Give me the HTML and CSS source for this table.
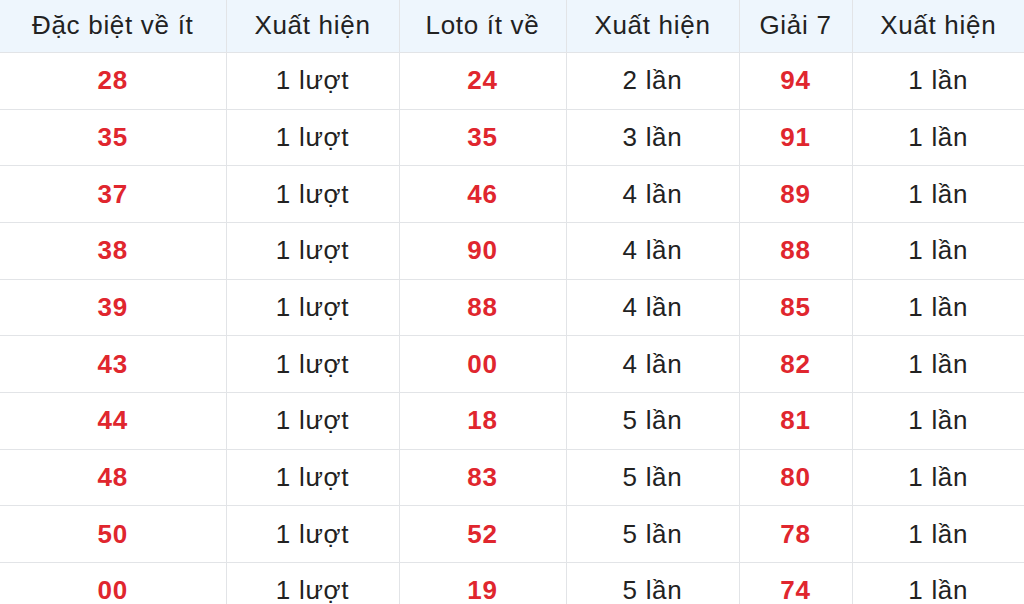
FILE: index.html
```html
<!DOCTYPE html>
<html lang="vi">
<head>
<meta charset="utf-8">
<link rel="stylesheet" href="styles.css">
</head>
<body>
<table class="stats">
  <colgroup>
    <col class="c1"><col class="c2"><col class="c3"><col class="c4"><col class="c5"><col class="c6">
  </colgroup>
  <thead>
    <tr><th>Đặc biệt về ít</th><th>Xuất hiện</th><th>Loto ít về</th><th>Xuất hiện</th><th>Giải 7</th><th>Xuất hiện</th></tr>
  </thead>
  <tbody>
    <tr><td class="num">28</td><td>1 lượt</td><td class="num">24</td><td>2 lần</td><td class="num">94</td><td>1 lần</td></tr>
    <tr><td class="num">35</td><td>1 lượt</td><td class="num">35</td><td>3 lần</td><td class="num">91</td><td>1 lần</td></tr>
    <tr><td class="num">37</td><td>1 lượt</td><td class="num">46</td><td>4 lần</td><td class="num">89</td><td>1 lần</td></tr>
    <tr><td class="num">38</td><td>1 lượt</td><td class="num">90</td><td>4 lần</td><td class="num">88</td><td>1 lần</td></tr>
    <tr><td class="num">39</td><td>1 lượt</td><td class="num">88</td><td>4 lần</td><td class="num">85</td><td>1 lần</td></tr>
    <tr><td class="num">43</td><td>1 lượt</td><td class="num">00</td><td>4 lần</td><td class="num">82</td><td>1 lần</td></tr>
    <tr><td class="num">44</td><td>1 lượt</td><td class="num">18</td><td>5 lần</td><td class="num">81</td><td>1 lần</td></tr>
    <tr><td class="num">48</td><td>1 lượt</td><td class="num">83</td><td>5 lần</td><td class="num">80</td><td>1 lần</td></tr>
    <tr><td class="num">50</td><td>1 lượt</td><td class="num">52</td><td>5 lần</td><td class="num">78</td><td>1 lần</td></tr>
    <tr><td class="num">00</td><td>1 lượt</td><td class="num">19</td><td>5 lần</td><td class="num">74</td><td>1 lần</td></tr>
  </tbody>
</table>
</body>
</html>
```
FILE: styles.css
```css
html, body {
  margin: 0;
  padding: 0;
  background: #ffffff;
}
body {
  font-family: "Liberation Sans", Arial, sans-serif;
  color: #222222;
}
.stats {
  width: 1024px;
  border-collapse: collapse;
  table-layout: fixed;
}
.c1 { width: 226px; }
.c2 { width: 173px; }
.c3 { width: 167px; }
.c4 { width: 173px; }
.c5 { width: 113px; }
.c6 { width: 172px; }
.stats th,
.stats td {
  text-align: center;
  vertical-align: middle;
  padding: 0;
  font-size: 26px;
  letter-spacing: 0.7px;
  border: 1px solid #e2e4e7;
}
.stats tr > :first-child { border-left: none; }
.stats tr > :last-child { border-right: none; }
.stats th {
  height: 50px;
  padding-bottom: 2px;
  font-weight: 400;
  background: #eef6fd;
  color: #222222;
  border-top: none;
}
.stats td {
  height: 55.67px;
  color: #222222;
}
.stats td.num {
  color: #e0262e;
  font-weight: 700;
}
```
